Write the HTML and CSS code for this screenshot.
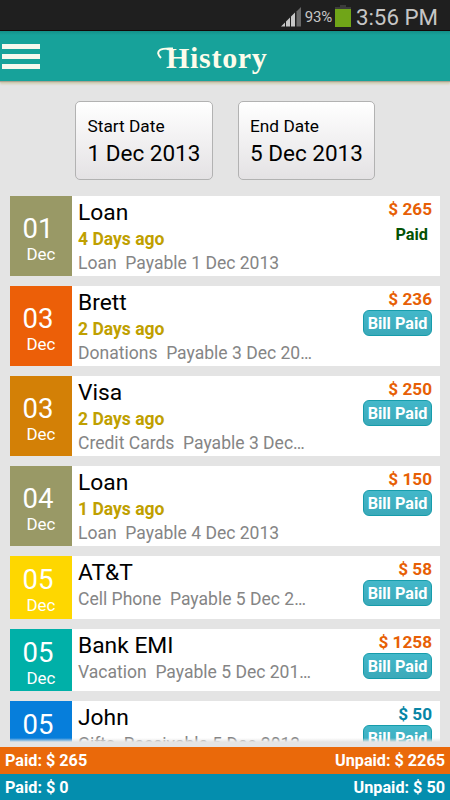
FILE: index.html
```html
<!DOCTYPE html>
<html lang="en">
<head>
    <meta charset="UTF-8">
    <title>History</title>
    <meta name="viewport" content="width=device-width, initial-scale=1">
    <link rel="stylesheet" href="styles.css">
</head>
<body>

    <!-- status bar -->
    <div class="status">
        <svg class="signal" width="20" height="20" viewBox="0 0 20 20">
            <path d="M0 19.5L4 15.5V19.5ZM5 19.5V14.5L9 10.5V19.5ZM10 19.5V9.5L14 5.500V19.5Z" fill="#c6c6c6"/>
            <path d="M15.500 19.500V4.500L20 0V19.500Z" fill="#686868"/>
        </svg>
        <span class="percent">93%</span>
        <svg class="battery" width="16" height="22" viewBox="0 0 16 22">
            <path d="M5 0H11V2H16V4H0V2H5Z" fill="#3b3b3b"/>
            <path d="M0 4H16V22H0Z" fill="#70a518"/>
        </svg>
        <span class="time">3:56 PM</span>
    </div>

    <!-- header -->
    <div class="header">
        <div class="menu"><i></i><i></i><i></i></div>
        <h1>
            <svg class="swash" width="16" height="12" viewBox="0 0 16 12">
                <path d="M4 11C1 8 0 5 3 3C6 1 10 1.500 16 1.500" fill="none" stroke="#fdfceb" stroke-width="2"/>
            </svg>
            History
        </h1>
    </div>

    <div class="dates">
        <div class="date-btn"><p>Start Date</p><b>1 Dec 2013</b></div>
        <div class="date-btn"><p>End Date</p><b>5 Dec 2013</b></div>
    </div>

    <!-- bills -->
    <ul class="list">
        <li>
            <div class="day olive"><b>01</b><span>Dec</span></div>
            <div class="info">
                <h2>Loan</h2>
                <p class="ago">4 Days ago</p>
                <p class="desc">Loan  Payable 1 Dec 2013</p>
            </div>
            <div class="side"><p class="amount">$ 265</p><p class="paid">Paid</p></div>
        </li>
        <li>
            <div class="day red"><b>03</b><span>Dec</span></div>
            <div class="info">
                <h2>Brett</h2>
                <p class="ago">2 Days ago</p>
                <p class="desc">Donations  Payable 3 Dec 20…</p>
            </div>
            <div class="side"><p class="amount">$ 236</p><p class="btn">Bill Paid</p></div>
        </li>
        <li>
            <div class="day orange"><b>03</b><span>Dec</span></div>
            <div class="info">
                <h2>Visa</h2>
                <p class="ago">2 Days ago</p>
                <p class="desc">Credit Cards  Payable 3 Dec…</p>
            </div>
            <div class="side"><p class="amount">$ 250</p><p class="btn">Bill Paid</p></div>
        </li>
        <li>
            <div class="day olive"><b>04</b><span>Dec</span></div>
            <div class="info">
                <h2>Loan</h2>
                <p class="ago">1 Days ago</p>
                <p class="desc">Loan  Payable 4 Dec 2013</p>
            </div>
            <div class="side"><p class="amount">$ 150</p><p class="btn">Bill Paid</p></div>
        </li>
        <li class="short">
            <div class="day yellow"><b>05</b><span>Dec</span></div>
            <div class="info">
                <h2>AT&amp;T</h2>
                <p class="desc">Cell Phone  Payable 5 Dec 2…</p>
            </div>
            <div class="side"><p class="amount">$ 58</p><p class="btn">Bill Paid</p></div>
        </li>
        <li class="short">
            <div class="day green"><b>05</b><span>Dec</span></div>
            <div class="info">
                <h2>Bank EMI</h2>
                <p class="desc">Vacation  Payable 5 Dec 201…</p>
            </div>
            <div class="side"><p class="amount">$ 1258</p><p class="btn">Bill Paid</p></div>
        </li>
        <li class="short">
            <div class="day blue"><b>05</b><span>Dec</span></div>
            <div class="info">
                <h2>John</h2>
                <p class="desc">Gifts  Receivable 5 Dec 2013</p>
            </div>
            <div class="side"><p class="amount receive">$ 50</p><p class="btn">Bill Paid</p></div>
        </li>
    </ul>

    <!-- totals -->
    <div class="total pay"><span>Paid: $ 265</span><span>Unpaid: $ 2265</span></div>
    <div class="total get"><span>Paid: $ 0</span><span>Unpaid: $ 50</span></div>

</body>
</html>
```

FILE: styles.css
```css
*{margin:0;padding:0;box-sizing:border-box;}
li{list-style: none}

body{
    display: flex;
    flex-direction: column;
    width: 450px;
    height: 800px;
    overflow: hidden;
    background-color: #e4e4e4;
    font-family: Roboto, sans-serif;
    color: #000;
}
svg{display: block;}

/* status bar */
.status{
    display: flex;
    justify-content: flex-end;
    flex: none;
    height: 31px;
    padding-right: 12px;
    background-color: #1f1f1f;
    border-bottom: 1px solid #130808;
    color: #c6c6c6;
}
.signal{margin: 7px 4px 0 0;}
.battery{margin: 5px 5px 0 3px;}
.percent{
    font-size: 15px;
    line-height: 34px;
    letter-spacing: -.2px;
}
.time{
    font-size: 22.3px;
    line-height: 35px;
}

/* header */
.header{
    position: relative;
    display: flex;
    flex: none;
    height: 50px;
    background: linear-gradient(#148f88, #17a29a 4px);
    box-shadow: 0 1px 1px #aaa593, 0 3px 2px #d0cdb2;
}
.menu{
    display: flex;
    flex-direction: column;
    gap: 5px;
    width: 38px;
    margin: 13px 0 0 2px;
}
.menu i{
    height: 5px;
    background-color: #f7f8ee;
}
.header h1{
    position: relative;
    margin-left: 126px;
    font-family: "Liberation Serif", serif;
    font-size: 30px;
    letter-spacing: .7px;
    line-height: 53px;
    color: #fdfceb;
}
/* swash of the first letter */
.swash{
    position: absolute;
    left: -9px;
    top: 16px;
}

.dates{
    display: flex;
    flex: none;
    gap: 25px;
    height: 115px;
    padding: 20px 0 0 75px;
}
.date-btn{
    width: 137.5px;
    height: 79px;
    padding: 12px 0 0 11.5px;
    border: 1px solid #b2b2b2;
    border-radius: 5px;
    background: linear-gradient(#fff, #e4e2e4);
}
.date-btn p{
    font-size: 17.3px;
    line-height: 25px;
}
.date-btn b{
    display: block;
    font-size: 22.5px;
    font-weight: normal;
    line-height: 28px;
}

/* bills */
.list{
    position: relative;
    flex: none;
    display: flex;
    flex-direction: column;
    gap: 10px;
    height: 546px;
    padding: 0 10px;
    overflow: hidden;
}
.list::after{
    content: "";
    position: absolute;
    left: 0;
    right: 0;
    bottom: 0;
    height: 4px;
    background: linear-gradient(rgba(228,228,228,0), #e4e4e4);
}
.list li{
    display: flex;
    flex: none;
    height: 80px;
    background-color: #fff;
}
.list li.short{height: 62.5px;}

.day{
    display: flex;
    flex-direction: column;
    justify-content: center;
    width: 62px;
    padding-top: 8px;
    color: #fff;
}
.day b{
    padding-left: 12.5px;
    font-size: 27.5px;
    font-weight: normal;
    line-height: 27px;
}
.day span{
    padding-left: 16.5px;
    margin-top: 1px;
    font-size: 16.9px;
    line-height: 22px;
}
.olive{background-color: #999966;}
.red{background-color: #ec5f08;}
.orange{background-color: #d38006;}
.yellow{background-color: #fed700;}
.green{background-color: #00b0a8;}
.blue{background-color: #067edb;}

.info{
    flex: 1;
    padding: 2px 0 0 6px;
}
.info h2{
    font-size: 22.8px;
    font-weight: normal;
    line-height: 29px;
}
.ago{
    font-size: 17.5px;
    font-weight: bold;
    line-height: 24px;
    color: #c0a000;
}
.desc{
    font-size: 17.55px;
    line-height: 24px;
    white-space: pre;
    color: #858585;
}

.side{
    display: flex;
    flex-direction: column;
    align-items: flex-end;
    padding-right: 8px;
    font-weight: bold;
}
.amount{
    height: 24px;
    font-size: 17.2px;
    line-height: 27px;
    color: #e75f05;
}
.receive{color: #0785a5;}
.paid{
    padding-right: 4px;
    font-size: 16.3px;
    line-height: 29px;
    color: #045204;
}
.btn{
    width: 69px;
    height: 26px;
    border: 1px solid #169cab;
    border-radius: 6px;
    background: linear-gradient(#43b8ca, #3ba9b9);
    font-size: 16.2px;
    line-height: 26px;
    text-align: center;
    color: #fff;
}

/* totals */
.total{
    display: flex;
    justify-content: space-between;
    flex: none;
    height: 27px;
    padding: 0 5px;
    font-size: 16.2px;
    font-weight: bold;
    line-height: 28px;
    color: #fff;
}
.pay{
    margin-top: 5px;
    background-color: #ea690a;
}
.get{background-color: #048eae;}
```
